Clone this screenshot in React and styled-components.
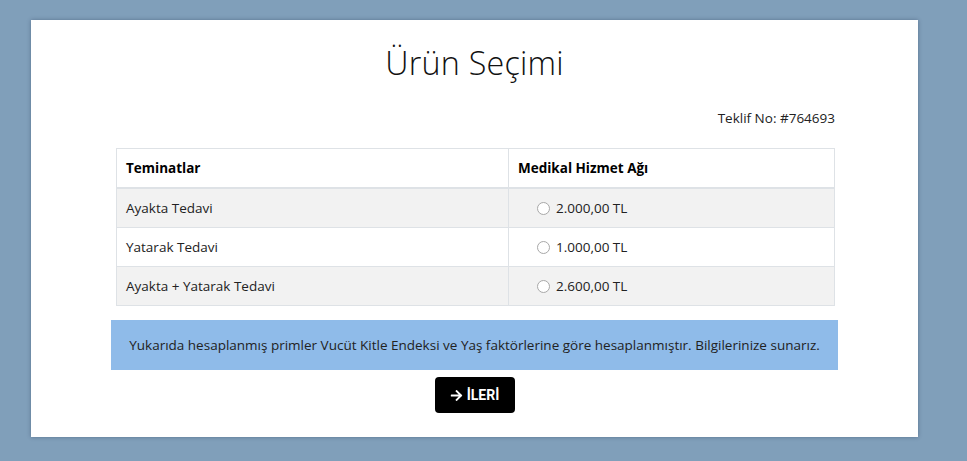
import React, { useState } from 'react';
import styled, { createGlobalStyle } from 'styled-components';

const GlobalStyle = createGlobalStyle`
    html, body {
        margin : 0;
        padding : 0;
        background : #809fba;
        font-family : "Open Sans", "Noto Sans", sans-serif;
        color : #212529;
    }
`;

const Page = styled.div`
    padding : 20px 49px 24px 31px;
    min-height : 461px;
    box-sizing : border-box;
`;
const Card = styled.div`
    background : #fff;
    height : 417px;
    box-sizing : border-box;
    padding : 23px 0 0;
    box-shadow : 0 0 4px rgba(40, 60, 90, 0.45);
    display : flex;
    flex-direction : column;
    align-items : center;
`;
const Title = styled.h1`
    margin : 0;
    font-size : 32.3px;
    font-weight : 300;
    line-height : 38px;
    letter-spacing : 0.2px;
    color : #111;
`;
const Inner = styled.div`
    width : 727px;
    margin-top : 28px;
`;
const OfferNo = styled.div`
    text-align : right;
    font-size : 13.5px;
    line-height : 18px;
    padding-right : 3px;
    color : #222;
`;
const Table = styled.table`
    width : 719px;
    margin : 21px 4px 0 5px;
    border-collapse : collapse;
    font-size : 13.5px;
`;
const Th = styled.th`
    text-align : left;
    font-weight : 700;
    height : 38px;
    padding : 0 9px;
    border : 1px solid #dee2e6;
    border-bottom : 2px solid #dee2e6;
    color : #000;
    width : ${p => p.w || 'auto'};
`;
const Row = styled.tr`
    background : ${p => p.striped ? '#f2f2f2' : '#fff'};
`;
const Td = styled.td`
    height : 38px;
    padding : 0 9px;
    border : 1px solid #dee2e6;
    color : #222;
`;
const RadioLabel = styled.label`
    display : flex;
    align-items : center;
    gap : 6px;
    padding-left : 19px;
    cursor : pointer;
`;
const Radio = styled.span`
    width : 11px;
    height : 11px;
    border-radius : 50%;
    border : 1px solid #a8a8a8;
    background : ${p => p.checked ? '#0075ff' : '#fff'};
    box-shadow : ${p => p.checked ? 'inset 0 0 0 2px #fff' : 'none'};
`;
const Alert = styled.div`
    margin-top : 14px;
    background : #8fbbe9;
    height : 50px;
    display : flex;
    align-items : center;
    justify-content : center;
    font-size : 13.5px;
    color : #222;
`;
const ButtonRow = styled.div`
    display : flex;
    justify-content : center;
    margin-top : 7px;
`;
const NextBtn = styled.button`
    background : #000;
    color : #fff;
    border : none;
    border-radius : 4px;
    width : 80px;
    height : 36px;
    font-family : "Roboto", sans-serif;
    font-weight : 700;
    font-size : 14px;
    display : flex;
    align-items : center;
    justify-content : center;
    gap : 4px;
    cursor : pointer;
`;

const rows = [
    { name : 'Ayakta Tedavi', price : '2.000,00 TL' },
    { name : 'Yatarak Tedavi', price : '1.000,00 TL' },
    { name : 'Ayakta + Yatarak Tedavi', price : '2.600,00 TL' },
];

function App() {
    const [selected, setSelected] = useState(null);
    return (
        <Page>
            <GlobalStyle />
            <Card>
                <Title>Ürün Seçimi</Title>
                <Inner>
                    <OfferNo>Teklif No: #764693</OfferNo>
                    <Table>
                        <thead>
                            <tr>
                                <Th w="373px">Teminatlar</Th>
                                <Th>Medikal Hizmet Ağı</Th>
                            </tr>
                        </thead>
                        <tbody>
                            { rows.map((val, idx) => (
                                <Row key={idx} striped={idx % 2 === 0}>
                                    <Td>{val.name}</Td>
                                    <Td>
                                        <RadioLabel onClick={() => setSelected(idx)}>
                                            <Radio checked={selected === idx} />
                                            {val.price}
                                        </RadioLabel>
                                    </Td>
                                </Row>
                            )) }
                        </tbody>
                    </Table>
                    <Alert>
                        Yukarıda hesaplanmış primler Vucüt Kitle Endeksi ve Yaş faktörlerine göre hesaplanmıştır. Bilgilerinize sunarız.
                    </Alert>
                    <ButtonRow>
                        <NextBtn>
                            <svg width="13" height="13" viewBox="0 0 448 512" fill="#fff">
                                <path d="M190.5 66.9l22.2-22.2c9.4-9.4 24.6-9.4 33.9 0L441 239c9.4 9.4 9.4 24.6 0 33.9L246.6 467.3c-9.4 9.4-24.6 9.4-33.9 0l-22.2-22.2c-9.5-9.5-9.3-25 .4-34.3L311.4 296H24c-13.3 0-24-10.7-24-24v-32c0-13.3 10.7-24 24-24h287.4L190.9 101.2c-9.8-9.3-10-24.8-.4-34.3z" />
                            </svg>
                            İLERİ
                        </NextBtn>
                    </ButtonRow>
                </Inner>
            </Card>
        </Page>
    );
}

export default App;
